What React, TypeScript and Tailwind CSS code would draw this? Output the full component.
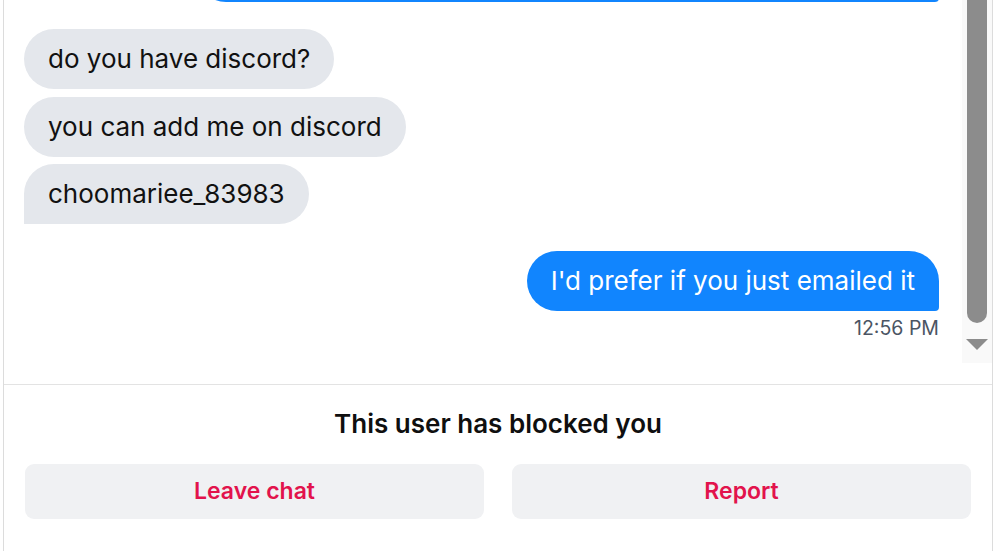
const font = { fontFamily: "Inter, 'Noto Sans', sans-serif" };

type Msg = { text: string; mine?: boolean; last?: boolean };

const theirs: Msg[] = [
  { text: "do you have discord?" },
  { text: "you can add me on discord" },
  { text: "choomariee_83983", last: true },
];

const Bubble = ({ text, mine, last }: Msg) => {
  if (mine) {
    return (
      <div className="self-end rounded-[30px] rounded-br-[4px] bg-[#1185fe] px-[24px] py-[15px] text-[26px] leading-[30px] text-white">
        {text}
      </div>
    );
  }
  return (
    <div
      className={`self-start rounded-[30px] bg-[#e4e7ec] px-[24px] py-[15px] text-[26px] leading-[30px] text-[#111111] ${
        last ? "rounded-bl-none" : ""
      }`}
    >
      {text}
    </div>
  );
};

const Scrollbar = () => (
  <div className="flex w-[30px] flex-col items-center bg-[#f9f9f9] h-[363px]">
    <div className="w-[20px] h-[323px] rounded-b-[10px] bg-[#8c8c8c]" />
    <svg width="22" height="12" viewBox="0 0 22 12" className="mt-[16px]">
      <polygon points="0,0 22,0 11,11" fill="#8c8c8c" />
    </svg>
  </div>
);

export default function App() {
  return (
    <div className="h-[551px] w-[1000px] overflow-hidden bg-white" style={font}>
      <div className="ml-[3px] flex h-full w-[990px] flex-col border-x border-[#dcdcdc]">
        {/* MESSAGES */}
        <div className="flex h-[384px] shrink-0">
          <div className="flex flex-1 flex-col overflow-hidden pl-[20px] pr-[23px]">
            <div className="mt-[-58px] ml-[172px] h-[60px] rounded-[30px] rounded-br-[4px] bg-[#1185fe]" />
            <div className="mt-[27px] flex flex-col gap-[7.5px]">
              {theirs.map((m) => (
                <Bubble key={m.text} {...m} />
              ))}
            </div>
            <div className="mt-[27px] flex flex-col">
              <Bubble text="I'd prefer if you just emailed it" mine />
              <div className="mt-[4px] self-end text-[19.5px] leading-[26px] text-[#4b5563]">
                12:56 PM
              </div>
            </div>
          </div>
          <Scrollbar />
        </div>

        {/* BLOCKED FOOTER */}
        <div className="flex flex-col border-t border-[#e3e3e3] px-[21px]">
          <p className="mt-[24px] text-center text-[26px] font-semibold leading-[30px] text-[#0f0f0f]">
            This user has blocked you
          </p>
          <div className="mt-[25px] flex gap-[28px]">
            <button className="h-[55px] flex-1 rounded-[9px] bg-[#f0f1f3] text-[23px] font-semibold text-[#e2134c]">
              Leave chat
            </button>
            <button className="h-[55px] flex-1 rounded-[9px] bg-[#f0f1f3] text-[23px] font-semibold text-[#e2134c]">
              Report
            </button>
          </div>
        </div>
      </div>
    </div>
  );
}
